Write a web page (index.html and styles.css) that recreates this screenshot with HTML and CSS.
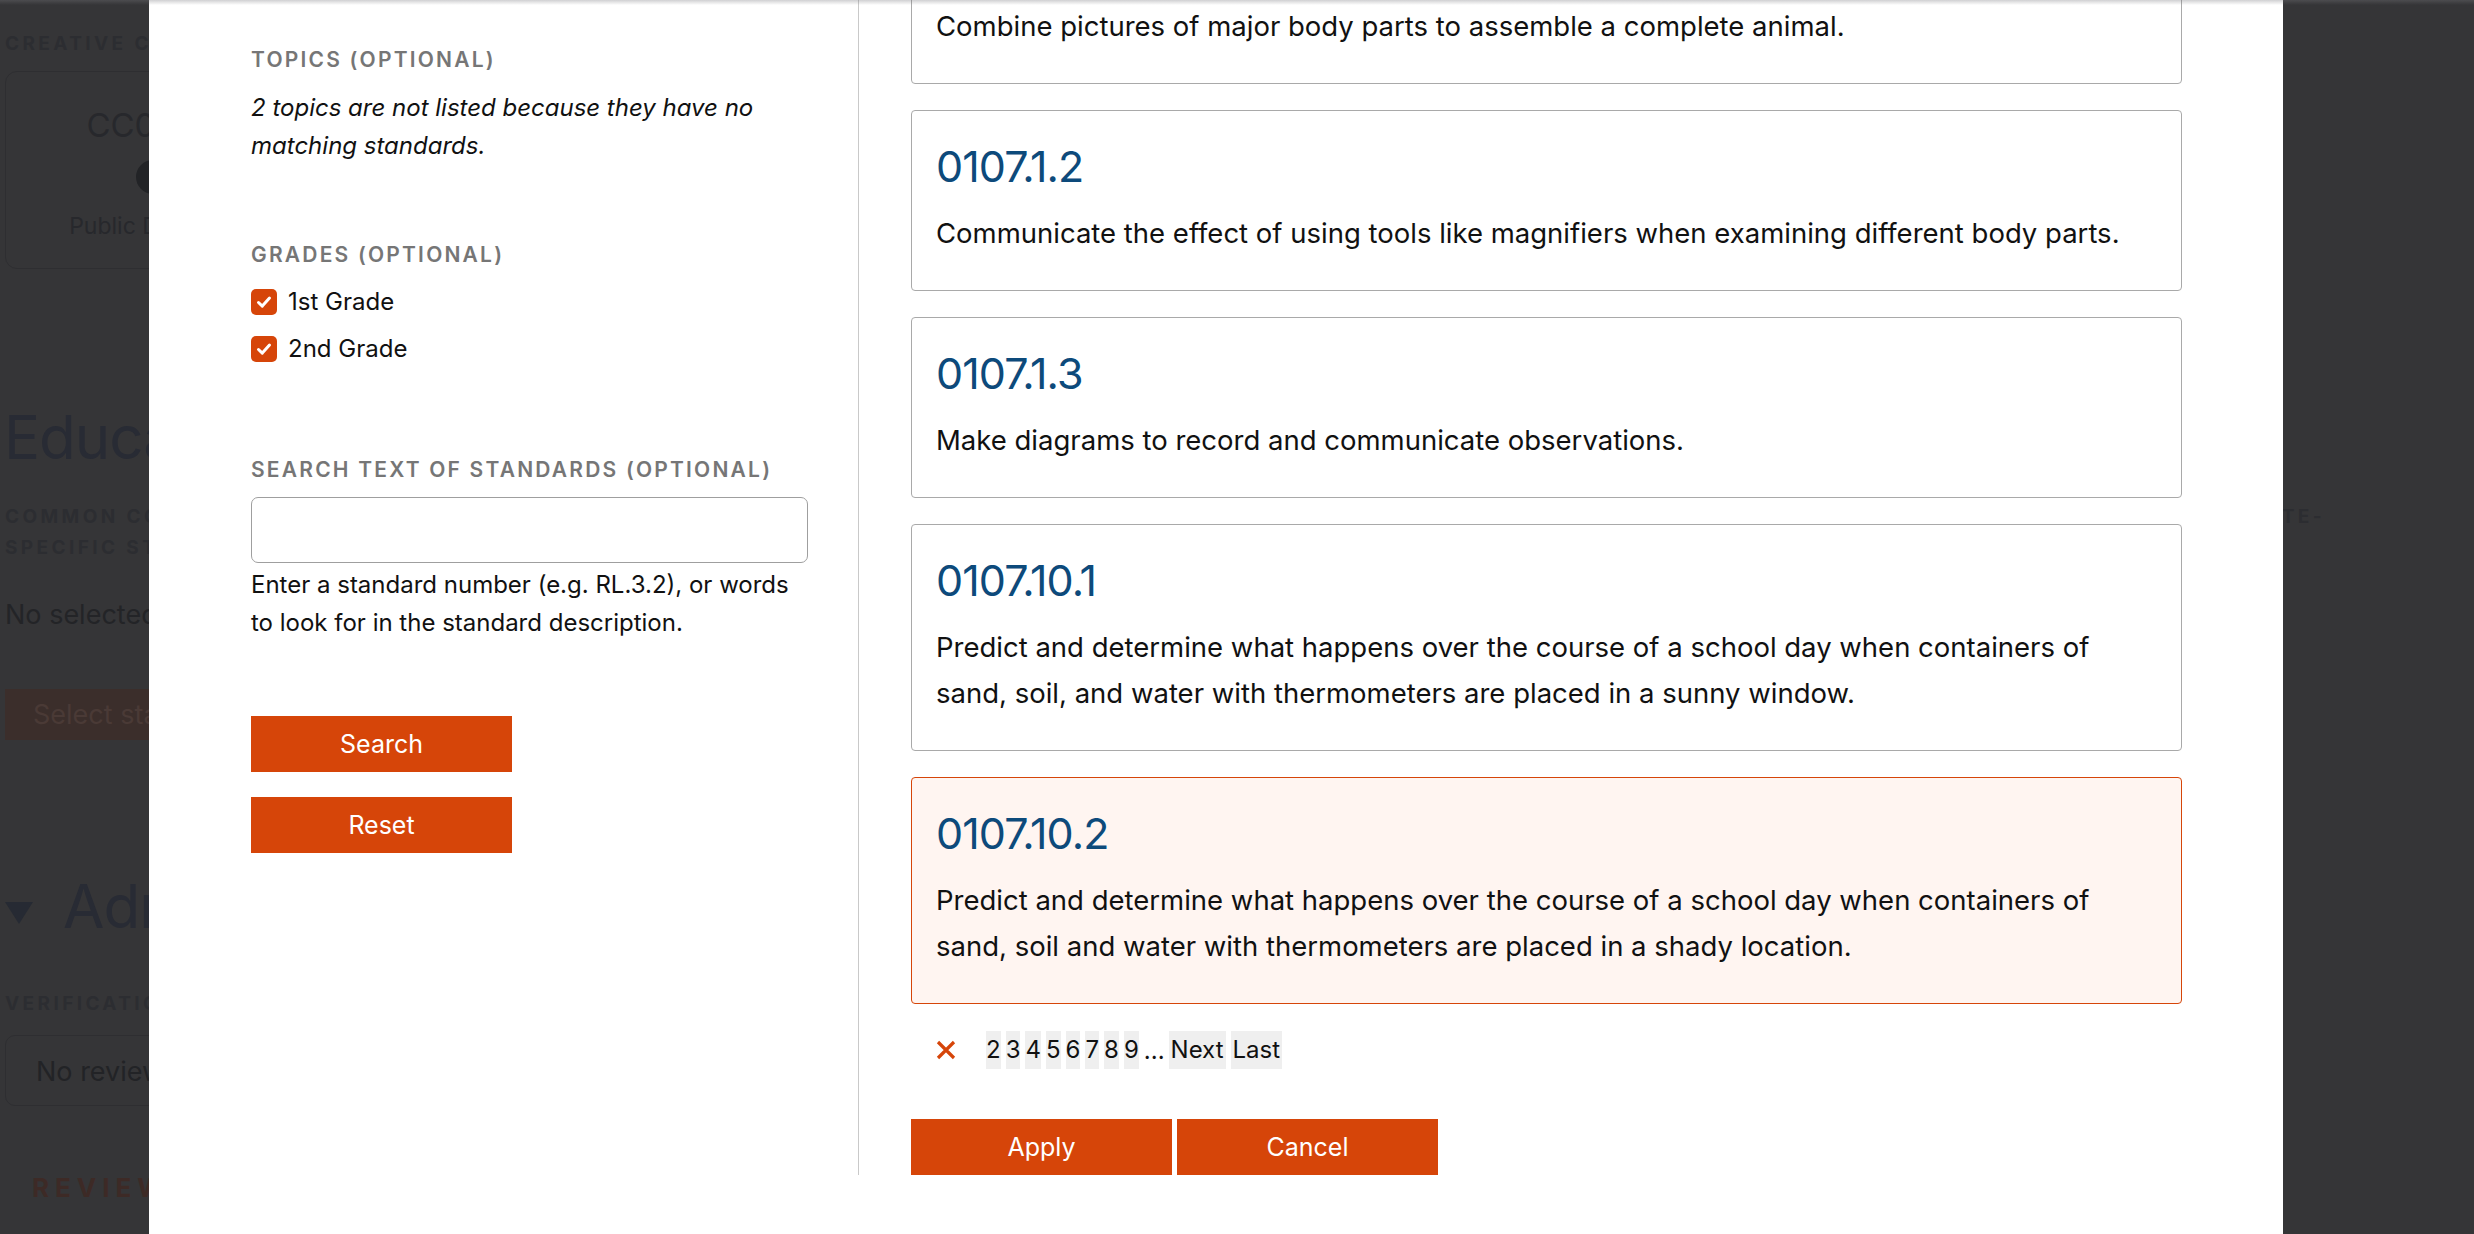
FILE: index.html
```html
<!DOCTYPE html>
<html lang="en">
<head>
<meta charset="utf-8">
<title>Select standards</title>
<link rel="stylesheet" href="styles.css">
</head>
<body>
<div class="page">
  <div class="bg-label first">CREATIVE COMMONS LICENSE</div>
  <div class="license-box">
    <div class="cc-name">CC0 1.0</div>
    <div class="cc-icon"></div>
    <div class="cc-desc">Public Domain</div>
  </div>
  <h2 class="bg-title">Educational Standards</h2>
  <div class="bg-label std-label"><span>COMMON CORE STATE STANDARDS AND</span><span>STATE-</span></div>
  <div class="bg-label">SPECIFIC STANDARDS</div>
  <p class="bg-text">No selected standards</p>
  <div class="bg-button">Select standards</div>
  <h2 class="bg-title admin"><svg class="tri" viewBox="0 0 28 22" width="28" height="22"><polygon points="0,0 28,0 14,22" fill="#262a33"/></svg>Admin</h2>
  <div class="bg-label verif">VERIFICATION</div>
  <div class="review-box">No reviews</div>
  <div class="bg-label reviews">REVIEWS</div>
</div>

<div class="modal">
  <div class="modal-body">
    <aside class="filters">
      <div class="filter-label">TOPICS (OPTIONAL)</div>
      <p class="note">2 topics are not listed because they have no matching standards.</p>

      <div class="filter-label grades-label">GRADES (OPTIONAL)</div>
      <label class="check"><span class="box"><svg viewBox="0 0 26 26" width="26" height="26"><path d="M7.5 13.5l3.8 3.6 7.2-8" fill="none" stroke="#fff" stroke-width="3" stroke-linecap="round" stroke-linejoin="round"/></svg></span>1st Grade</label>
      <label class="check"><span class="box"><svg viewBox="0 0 26 26" width="26" height="26"><path d="M7.5 13.5l3.8 3.6 7.2-8" fill="none" stroke="#fff" stroke-width="3" stroke-linecap="round" stroke-linejoin="round"/></svg></span>2nd Grade</label>

      <div class="filter-label search-label">SEARCH TEXT OF STANDARDS (OPTIONAL)</div>
      <input class="search-input" type="text" aria-label="Search text of standards">
      <p class="help">Enter a standard number (e.g. RL.3.2), or words to look for in the standard description.</p>

      <button class="btn search-btn">Search</button>
      <button class="btn reset-btn">Reset</button>
    </aside>

    <main class="results">
      <ul class="standards">
        <li class="card">
          <h3 class="code">0107.1.1</h3>
          <p class="desc">Combine pictures of major body parts to assemble a complete animal.</p>
        </li>
        <li class="card">
          <h3 class="code">0107.1.2</h3>
          <p class="desc">Communicate the effect of using tools like magnifiers when examining different body parts.</p>
        </li>
        <li class="card">
          <h3 class="code">0107.1.3</h3>
          <p class="desc">Make diagrams to record and communicate observations.</p>
        </li>
        <li class="card">
          <h3 class="code">0107.10.1</h3>
          <p class="desc">Predict and determine what happens over the course of a school day when containers of sand, soil, and water with thermometers are placed in a sunny window.</p>
        </li>
        <li class="card selected">
          <h3 class="code">0107.10.2</h3>
          <p class="desc">Predict and determine what happens over the course of a school day when containers of sand, soil and water with thermometers are placed in a shady location.</p>
        </li>
      </ul>

      <div class="pager">
        <span class="pager-x"><svg viewBox="0 0 20 20" width="20" height="20"><path d="M2 2L18 18M18 2L2 18" stroke="#d64509" stroke-width="3.2" fill="none"/></svg></span>
        <a class="pg">2</a><a class="pg">3</a><a class="pg">4</a><a class="pg">5</a><a class="pg">6</a><a class="pg">7</a><a class="pg">8</a><a class="pg">9</a><span class="dots">...</span><a class="pg word">Next</a><a class="pg word">Last</a>
      </div>

      <div class="actions">
        <button class="btn">Apply</button>
        <button class="btn">Cancel</button>
      </div>
    </main>
  </div>
</div>

<div class="top-shade"></div>
</body>
</html>
```

FILE: styles.css
```css
html, body {
  margin: 0;
  padding: 0;
}

body {
  width: 2474px;
  height: 1234px;
  overflow: hidden;
  background: #353537;
  font-family: Inter, "Noto Sans", sans-serif;
  color: #111;
}

/* ---------- dimmed page behind the dialog ---------- */
.page {
  padding: 0 0 0 5px;
  width: 2320px;
}

.bg-label {
  font-size: 19px;
  font-weight: 700;
  letter-spacing: 3.4px;
  line-height: 31px;
  color: #2c2d31;
}

.bg-label.first {
  padding-top: 28px;
}

.license-box {
  margin-top: 12px;
  width: 284px;
  height: 198px;
  border: 1px solid #2e2e31;
  border-radius: 12px;
  text-align: center;
  box-sizing: border-box;
  padding-top: 32px;
}

.cc-name {
  font-size: 33px;
  line-height: 42px;
  color: #27282c;
}

.cc-icon {
  width: 34px;
  height: 34px;
  border-radius: 50%;
  background: #222326;
  margin: 14px auto 0;
  position: relative;
  left: 6px;
}

.cc-desc {
  font-size: 23px;
  line-height: 32px;
  margin-top: 16px;
  color: #27282c;
}

.bg-title {
  margin: 130px 0 0 -1px;
  font-size: 60px;
  font-weight: 400;
  letter-spacing: -1px;
  line-height: 76px;
  color: #282b34;
}

.std-label {
  margin-top: 26px;
  display: flex;
  justify-content: space-between;
}

.bg-text {
  margin: 34px 0 0;
  font-size: 27px;
  line-height: 36px;
  color: #232427;
}

.bg-button {
  margin-top: 56px;
  width: 300px;
  height: 51px;
  line-height: 51px;
  padding-left: 28px;
  box-sizing: border-box;
  background: #3b2e2b;
  color: #4a3a36;
  font-size: 27px;
}

.bg-title.admin {
  margin-top: 128px;
  margin-left: 0;
}

.tri {
  display: inline-block;
  vertical-align: 4px;
  margin-right: 30px;
}

.bg-label.verif {
  margin-top: 44px;
}

.review-box {
  margin-top: 16px;
  width: 500px;
  height: 71px;
  line-height: 71px;
  border: 1px solid #2e2e31;
  border-radius: 10px;
  padding-left: 30px;
  box-sizing: border-box;
  font-size: 27px;
  color: #222326;
}

.bg-label.reviews {
  margin: 66px 0 0 27px;
  font-size: 26px;
  letter-spacing: 6px;
  color: #3d2a26;
}

/* ---------- dialog ---------- */
.modal {
  position: fixed;
  top: 0;
  left: 149px;
  width: 2134px;
  height: 1234px;
  background: #fff;
  overflow: hidden;
  box-sizing: border-box;
  padding: 0 101px 0 102px;
}

.top-shade {
  position: fixed;
  top: 0;
  left: 0;
  width: 2474px;
  height: 5px;
  background: linear-gradient(rgba(120, 120, 125, 0.35), rgba(120, 120, 125, 0));
}

.modal-body {
  display: flex;
  align-items: stretch;
  margin-top: -97px;
}

/* left column */
.filters {
  flex: 0 0 557px;
  padding: 142px 50px 0 0;
  border-right: 1px solid #c9c9c9;
}

.filter-label {
  font-size: 21px;
  font-weight: 600;
  letter-spacing: 2.2px;
  line-height: 30px;
  color: #767676;
}

.note {
  margin: 14px 0 0;
  font-size: 24px;
  font-style: italic;
  line-height: 38px;
}

.grades-label {
  margin-top: 75px;
}

.check {
  display: flex;
  align-items: center;
  height: 47px;
  font-size: 24px;
}

.grades-label + .check {
  margin-top: 8px;
}

.box {
  width: 26px;
  height: 26px;
  border-radius: 5px;
  background: #d64509;
  margin-right: 11px;
  flex: 0 0 26px;
  display: flex;
}

.search-label {
  margin-top: 83px;
}

.search-input {
  display: block;
  margin-top: 12px;
  width: 100%;
  height: 66px;
  box-sizing: border-box;
  border: 1px solid #9f9f9f;
  border-radius: 7px;
  font: inherit;
}

.help {
  margin: 3px 0 0;
  font-size: 24px;
  line-height: 38px;
}

.btn {
  display: block;
  width: 261px;
  height: 56px;
  border: 0;
  border-radius: 0;
  background: #d64509;
  color: #fff;
  font-family: Inter, "Noto Sans", sans-serif;
  font-size: 25px;
  padding: 0;
}

.search-btn {
  margin-top: 74px;
}

.reset-btn {
  margin-top: 25px;
}

/* right column */
.results {
  flex: 1 1 auto;
  padding-left: 52px;
}

.standards {
  list-style: none;
  margin: 0;
  padding: 0;
  display: flex;
  flex-direction: column;
  gap: 26px;
}

.card {
  border: 1px solid #a9a9a9;
  border-radius: 4px;
  padding: 33px 47px 34px 24px;
}

.card.selected {
  border-color: #d64509;
  background: #fff5f1;
}

.code {
  margin: 0 0 22px;
  font-size: 43px;
  font-weight: 400;
  letter-spacing: -0.9px;
  line-height: 44px;
  color: #0d4a7b;
}

.desc {
  margin: 0;
  font-size: 27.5px;
  line-height: 46px;
}

.pager {
  display: flex;
  align-items: center;
  height: 38px;
  margin-top: 27px;
  padding-left: 25px;
  font-size: 24px;
}

.pager-x {
  display: flex;
  margin-right: 30px;
}

.pg {
  display: inline-block;
  background: #efefef;
  line-height: 38px;
  height: 38px;
  margin-right: 5px;
}

.pg.word {
  padding: 0 2px;
}

.dots {
  margin-right: 4px;
}

.actions {
  display: flex;
  gap: 5px;
  margin-top: 50px;
}
```
